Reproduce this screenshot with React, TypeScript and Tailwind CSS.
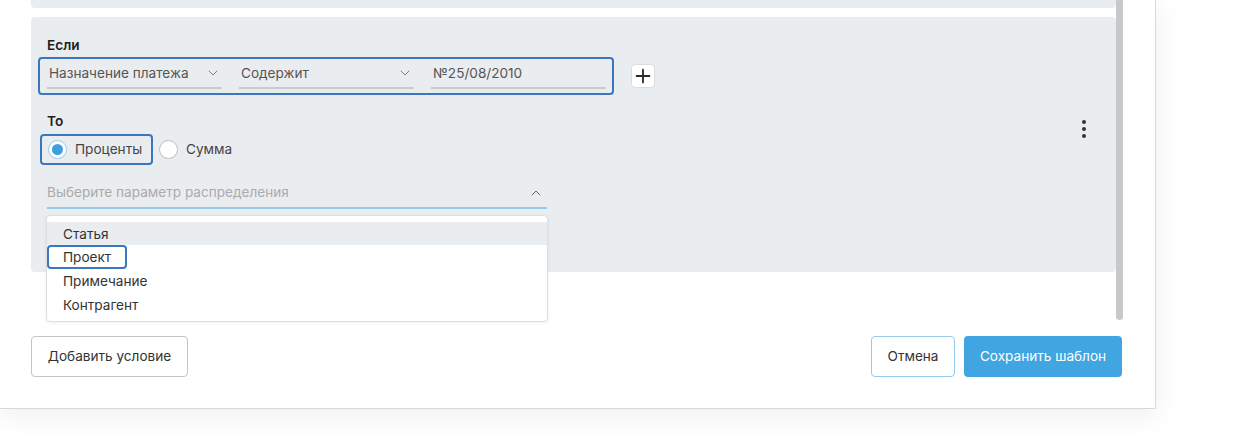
import React from 'react';
import { ChevronDown, ChevronUp, Plus } from 'lucide-react';

const font = { fontFamily: 'Inter, "Noto Sans", sans-serif' };

const SelectField = ({ label, withChevron = true }: { label: string; withChevron?: boolean }) => (
  <div className="w-[175px] h-[30px] flex items-center justify-between border-b-2 border-[#c9cbcd] pl-[2px] pr-[1px]">
    <span className="text-[13.6px] text-[#555]">{label}</span>
    {withChevron && <ChevronDown className="w-[16px] h-[16px] text-[#777]" strokeWidth={1.4} />}
  </div>
);

const Radio = ({ checked, label }: { checked?: boolean; label: string }) => (
  <div className="flex items-center gap-[8px]">
    <span
      className={`w-[19px] h-[19px] rounded-full border flex items-center justify-center bg-white ${
        checked ? 'border-[#9ccbec]' : 'border-[#bdbdbd]'
      }`}
    >
      {checked && <span className="w-[11px] h-[11px] rounded-full bg-[#3aa0e2]" />}
    </span>
    <span className="text-[13.6px] text-[#444]">{label}</span>
  </div>
);

export default function App() {
  return (
    <div className="relative w-[1251px] h-[435px] bg-white overflow-hidden" style={font}>
      <div className="w-[1156px] h-[409px] bg-white border-r border-b border-[#d8d8d8] rounded-br-[2px] shadow-[0_6px_30px_rgba(0,0,0,0.07)] flex flex-col">
        {/* scroll area */}
        <div className="h-[320px] flex">
          <div className="w-[1116px] pl-[31px] flex flex-col">
            <div className="h-[8px] bg-[#eaedf0] rounded-b-[4px]" />
            <div className="relative mt-[9px] h-[255px] bg-[#eaedf0] rounded-[4px] pl-[16px] pt-[20px]">
              <div className="text-[13.6px] font-semibold text-[#1d1d1d] leading-[16px]">Если</div>
              <div className="flex items-center mt-[4px]">
                <div className="-ml-[9px] w-[576px] h-[38px] border-2 border-[#3a77bf] rounded-[4px] pl-[7px] flex items-start gap-[17px]">
                  <SelectField label="Назначение платежа" />
                  <SelectField label="Содержит" />
                  <SelectField label="№25/08/2010" withChevron={false} />
                </div>
                <button className="ml-[17px] w-[24px] h-[24px] bg-white border border-[#dcdcdc] rounded-[4px] flex items-center justify-center">
                  <Plus className="w-[22px] h-[22px] text-[#2b2b2b]" strokeWidth={2} />
                </button>
              </div>

              <div className="mt-[18px] text-[13.6px] font-semibold text-[#1d1d1d] leading-[16px]">То</div>
              <div className="flex items-center mt-[5px] gap-[6px]">
                <div className="-ml-[7px] w-[113px] h-[31px] border-2 border-[#3a77bf] rounded-[4px] pl-[6px] flex items-center">
                  <Radio checked label="Проценты" />
                </div>
                <Radio label="Сумма" />
              </div>

              <div className="mt-[13px] w-[500px] h-[31px] border-b-2 border-[#93caed] flex items-center justify-between pr-[3px]">
                <span className="text-[13.6px] text-[#aaaaaa]">Выберите параметр распределения</span>
                <ChevronUp className="w-[16px] h-[16px] text-[#666]" strokeWidth={1.5} />
              </div>

              {/* kebab */}
              <div className="absolute left-[1051px] top-[103px] flex flex-col gap-[3px]">
                <span className="w-[4px] h-[4px] rounded-full bg-[#333]" />
                <span className="w-[4px] h-[4px] rounded-full bg-[#333]" />
                <span className="w-[4px] h-[4px] rounded-full bg-[#333]" />
              </div>

              {/* dropdown */}
              <div className="absolute left-[15px] top-[198px] w-[502px] bg-white border border-[#dedede] rounded-[4px] shadow-[0_1px_4px_rgba(0,0,0,0.06)] pt-[6px] pb-[4px] z-10">
                <div className="h-[23px] bg-[#eaedf0] flex items-center pl-[16px] pt-[1px] text-[13.6px] text-[#333]">Статья</div>
                <div className="relative h-[24px] flex items-center pl-[16px] pt-[1px] text-[13.6px] text-[#333]">
                  Проект
                  <div className="absolute left-0 top-0 w-[80px] h-[24px] border-2 border-[#3a77bf] rounded-[4px]" />
                </div>
                <div className="h-[24px] flex items-center pl-[16px] pt-[1px] text-[13.6px] text-[#333]">Примечание</div>
                <div className="h-[24px] flex items-center pl-[16px] pt-[1px] text-[13.6px] text-[#333]">Контрагент</div>
              </div>
            </div>
          </div>
          <div className="w-[7px] h-[320px] bg-[#c8c8c8] rounded-b-[4px]" />
        </div>

        {/* footer */}
        <div className="flex items-center pl-[31px] pr-[33px] mt-[16px]">
          <button className="h-[41px] w-[157px] bg-white border border-[#c4c4c4] rounded-[4px] text-[13.6px] text-[#333]">
            Добавить условие
          </button>
          <div className="ml-auto flex gap-[9px]">
            <button className="h-[41px] w-[84px] bg-white border border-[#93caed] rounded-[4px] text-[13.6px] text-[#333]">
              Отмена
            </button>
            <button className="h-[41px] w-[158px] bg-[#41a5e1] rounded-[4px] text-[13.6px] text-white">
              Сохранить шаблон
            </button>
          </div>
        </div>
      </div>
    </div>
  );
}
